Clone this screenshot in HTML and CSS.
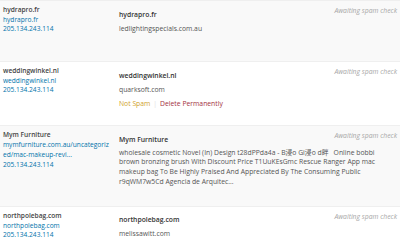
FILE: index.html
```html
<!DOCTYPE html>
<html lang="en">
<head>
    <meta charset="UTF-8">
    <meta name="viewport" content="width=device-width, initial-scale=1.0">
    <title>Comments</title>
    <link rel="stylesheet" href="styles.css">
</head>
<body>

<div class="comment-list">

    <div class="comment-row alt">
        <div class="col-author">
            <strong>hydrapro.fr</strong>
            <a href="#">hydrapro.fr</a>
            <a href="#">205.134.243.114</a>
        </div>
        <div class="col-comment">
            <div class="title">hydrapro.fr</div>
            <p>ledlightingspecials.com.au</p>
        </div>
        <div class="spam-status">Awaiting spam check</div>
    </div>

    <div class="comment-row">
        <div class="col-author">
            <strong>weddingwinkel.nl</strong>
            <a href="#">weddingwinkel.nl</a>
            <a href="#">205.134.243.114</a>
        </div>
        <div class="col-comment">
            <div class="title">weddingwinkel.nl</div>
            <p>quarksoft.com</p>
            <div class="row-actions">
                <a href="#" class="unspam">Not Spam</a><span class="sep">|</span><a href="#" class="delete">Delete Permanently</a>
            </div>
        </div>
        <div class="spam-status">Awaiting spam check</div>
    </div>

    <div class="comment-row alt">
        <div class="col-author">
            <strong>Mym Furniture</strong>
            <a href="#" class="long-url">mymfurniture.com.au/uncategorized/mac-makeup-revi...</a>
            <a href="#">205.134.243.114</a>
        </div>
        <div class="col-comment">
            <div class="title">Mym Furniture</div>
            <p class="body-text">wholesale cosmetic Novel (In) Design t28dPPda4a - B浸o Gi浸o d畔&ensp; Online bobbi brown bronzing brush With Discount Price T1UuKEsGmc Rescue Ranger App mac makeup bag To Be Highly Praised And Appreciated By The Consuming Public r9qWM7w5Cd Agencia de Arquitec...</p>
        </div>
        <div class="spam-status">Awaiting spam check</div>
    </div>

    <div class="comment-row">
        <div class="col-author">
            <strong>northpolebag.com</strong>
            <a href="#">northpolebag.com</a>
            <a href="#">205.134.243.114</a>
        </div>
        <div class="col-comment">
            <div class="title">northpolebag.com</div>
            <p>melissawitt.com</p>
        </div>
        <div class="spam-status">Awaiting spam check</div>
    </div>

</div>

</body>
</html>
```

FILE: styles.css
```css
/* General */
body {
    margin: 0;
    padding: 0;
    font-family: "Open Sans", "Noto Sans CJK SC", sans-serif;
    font-size: 6.8px;
    line-height: 9.7px;
    color: #555;
    background-color: #fff;
}

a {
    color: #0073aa;
    text-decoration: none;
}

/* Rows */
.comment-row {
    position: relative;
    display: grid;
    grid-template-columns: 119px 1fr;
    min-height: 61px;
    box-sizing: border-box;
    padding: 4px 0 19.5px;
    border-top: 1px solid #efefef;
}

.comment-row.alt {
    background-color: #f9f9f9;
}

/* Author column */
.col-author {
    display: flex;
    flex-direction: column;
    padding-left: 3px;
    padding-right: 9px;
    font-size: 6.6px;
}

.col-author strong {
    font-weight: 600;
    color: #444;
}

.long-url {
    word-break: break-all;
}

/* Comment column */
.col-comment {
    padding-top: 4.5px;
    padding-right: 16px;
}

.title {
    font-weight: 600;
    color: #333;
}

.col-comment p {
    margin: 4.3px 0 0;
}

.col-comment p.body-text {
    margin-top: 3px;
}

.row-actions {
    margin-top: 5px;
    margin-bottom: -3px;
}

.row-actions .unspam {
    color: #cf9f2c;
}

.row-actions .delete {
    color: #a3303e;
}

.row-actions .sep {
    color: #ddd;
    margin: 0 3px;
}

/* Akismet status */
.spam-status {
    position: absolute;
    top: 5px;
    right: 3px;
    font-style: italic;
    color: #a7a7a7;
}
```
